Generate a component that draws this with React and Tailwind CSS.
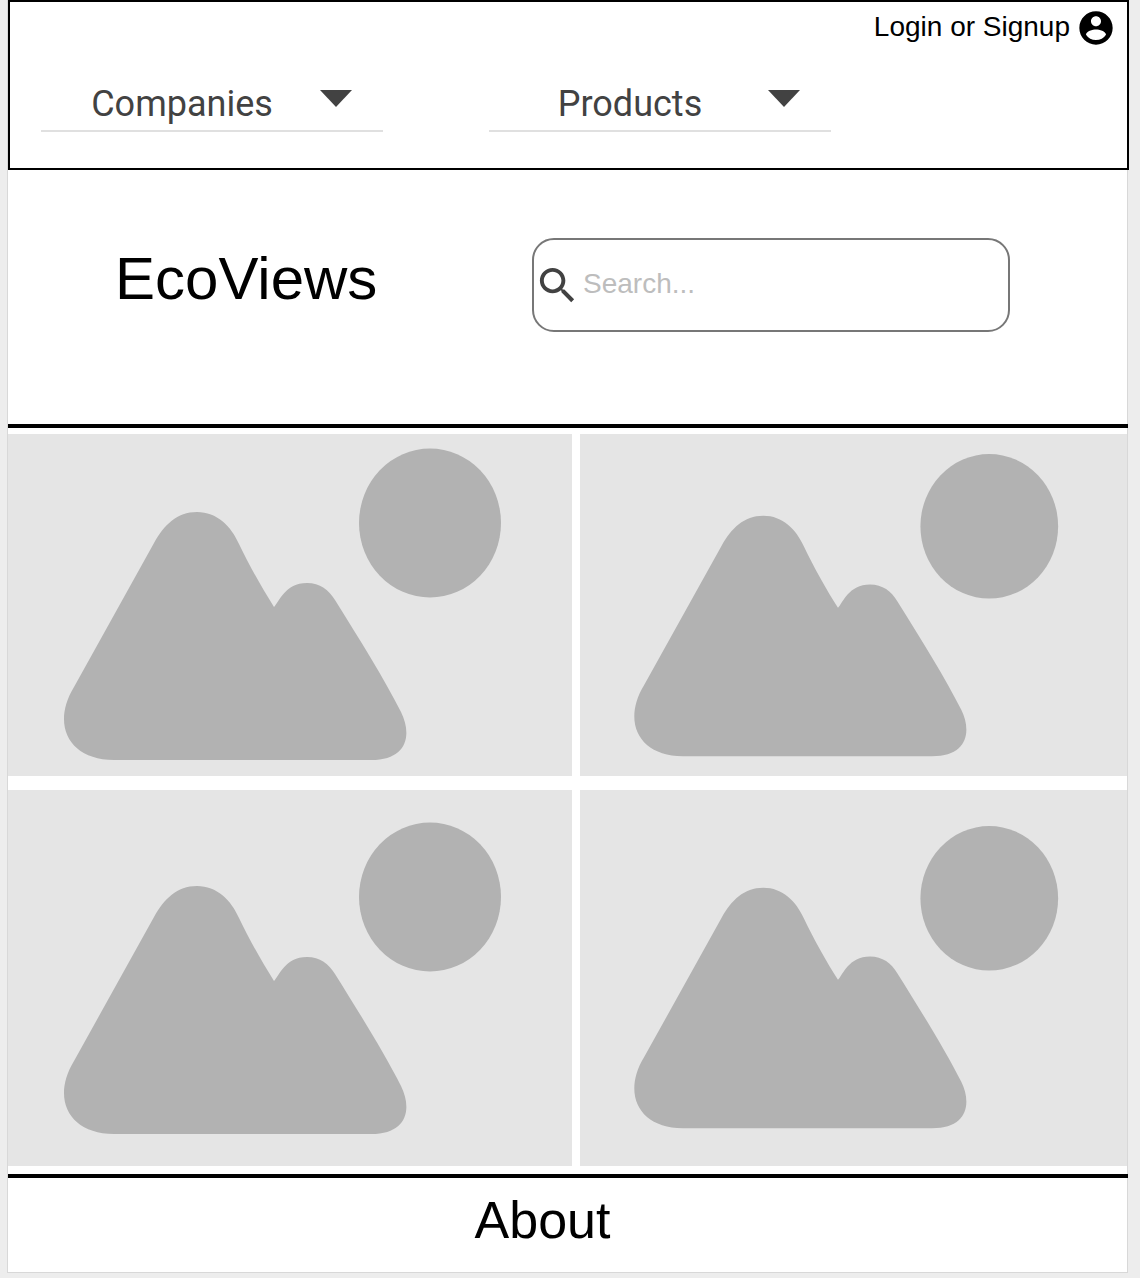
function Placeholder() {
  return (
    <svg viewBox="0 0 564 342" className="block w-full" aria-hidden="true">
      <g transform="translate(-8 -434)" fill="#b2b2b2">
        <ellipse cx="430" cy="523" rx="71" ry="74.5" />
        <path d="M197 512C217 512 231 526 239 544C249 565 262 588 274 607C279 602 285 583 307 583C320 583 329 590 335 600C360 640 385 680 401 712C412 734 408 760 371 760L114 760C69 760 51 725 74 687L154 543C164 525 177 512 197 512Z" />
      </g>
    </svg>
  );
}

function Dropdown({ label }) {
  return (
    <div className="flex h-[50px] w-[342px] border-b-2 border-[#e0e0e0]">
      <div className="flex flex-1 items-center justify-center pb-[4px] pl-[3px] text-center font-['Roboto',sans-serif] text-[36px] leading-[40px] text-[#424242]">
        {label}
      </div>
      <div className="mt-[8px] mr-[31px] h-0 w-0 border-x-[16px] border-t-[17px] border-x-transparent border-t-[#424242]" />
    </div>
  );
}

function Tile({ className }) {
  return (
    <div className={className}>
      <Placeholder />
    </div>
  );
}

export default function App() {
  return (
    <div className="h-[1278px] overflow-hidden bg-[#ededed] font-['Liberation_Sans',sans-serif]">
      <div className="ml-[7px] h-[1273px] w-[1121px] border-x border-b border-[#d8d8d8] bg-white">
        <header className="-mr-[2px] h-[170px] border-2 border-black bg-white">
          <div className="flex h-[50px] items-center justify-end gap-[6px] pr-[11px] text-[28px] text-black">
            <span>Login or Signup</span>
            <svg viewBox="0 0 24 24" className="mt-[2px] h-[40px] w-[40px]" fill="currentColor" aria-hidden="true">
              <path d="M12 2C6.48 2 2 6.48 2 12s4.48 10 10 10 10-4.48 10-10S17.52 2 12 2zm0 3c1.66 0 3 1.34 3 3s-1.34 3-3 3-3-1.34-3-3 1.34-3 3-3zm0 14.2c-2.5 0-4.71-1.28-6-3.22.03-1.99 4-3.08 6-3.08 1.99 0 5.97 1.09 6 3.08-1.29 1.94-3.5 3.22-6 3.22z" />
            </svg>
          </div>
          <div className="mt-[30px] flex gap-[106px] pl-[31px]">
            <Dropdown label="Companies" />
            <Dropdown label="Products" />
          </div>
        </header>

        <section className="flex h-[254px] items-start pt-[68px]">
          <div className="ml-[107px] w-[260px] pb-[10px] text-[60px] leading-[82px] whitespace-nowrap text-black">
            EcoViews
          </div>
          <label className="ml-[157px] flex h-[94px] w-[478px] items-center rounded-[22px] border-2 border-[#777777] bg-white">
            <svg viewBox="0 0 24 24" className="mt-[1px] h-[47px] w-[47px] shrink-0" fill="#424242" aria-hidden="true">
              <path d="M15.5 14h-.79l-.28-.27C15.41 12.59 16 11.11 16 9.5 16 5.91 13.09 3 9.5 3S3 5.91 3 9.5 5.91 16 9.5 16c1.61 0 3.09-.59 4.23-1.57l.27.28v.79l5 4.99L20.49 19l-4.99-5zm-6 0C7.01 14 5 11.99 5 9.5S7.01 5 9.5 5 14 7.01 14 9.5 11.99 14 9.5 14z" />
            </svg>
            <input
              placeholder="Search..."
              className="mb-[2px] ml-[2px] min-w-0 flex-1 bg-transparent text-[28px] outline-none placeholder:text-[#bdbdbd]"
            />
          </label>
        </section>

        <div className="-mr-px h-[4px] bg-black" />

        <main className="grid grid-cols-[564px_547px] grid-rows-[342px_376px] gap-x-[8px] gap-y-[14px] pt-[6px] pb-[8px]">
          <Tile className="flex items-center bg-[#e5e5e5]" />
          <Tile className="flex items-center bg-[#e5e5e5] pt-[1px]" />
          <Tile className="flex items-center bg-[#e5e5e5] pt-[2px]" />
          <Tile className="flex items-center bg-[#e5e5e5]" />
        </main>

        <div className="-mr-px h-[4px] bg-black" />

        <footer className="flex h-[94px] justify-center pt-[12px] pr-[50px] text-[52px] leading-[60px] text-black">
          About
        </footer>
      </div>
    </div>
  );
}
